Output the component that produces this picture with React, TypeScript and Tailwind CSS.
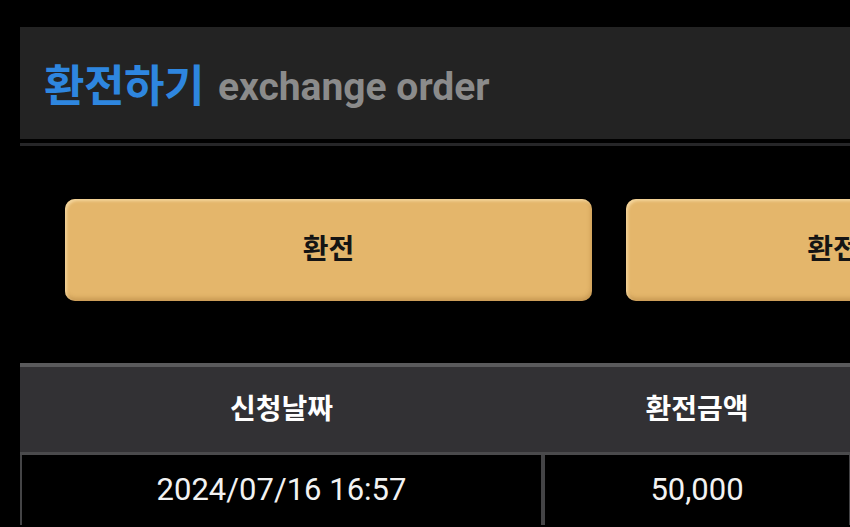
import React from "react";

const font = { fontFamily: 'Roboto, "Noto Sans CJK KR", "Noto Sans", sans-serif' };

const btn =
  "flex h-[102px] w-[527px] shrink-0 items-center justify-center rounded-[10px] bg-[#e4b66b] text-[28px] font-bold text-[#141414] shadow-[inset_2px_2px_3px_rgba(255,235,190,0.6),inset_-1px_-3px_4px_rgba(150,100,40,0.35),0_2px_3px_rgba(0,0,0,0.6)]";

export default function App() {
  return (
    <div className="min-h-screen w-full overflow-hidden bg-black" style={font}>
      <div className="w-[1300px] pl-[20px] pt-[27px]">
        {/* Header panel */}
        <div className="flex h-[112px] items-center bg-[#232323] pl-[24px] pt-[8px]">
          <span className="text-[44px] font-bold leading-none tracking-[-0.5px] text-[#2e86df]">환전하기</span>
          <span className="ml-[14px] text-[39px] font-bold leading-none text-[#8b8b8b]">exchange order</span>
        </div>
        <div className="mt-[4px] h-[3px] bg-[#262628]" />

        {/* Buttons */}
        <div className="mt-[53px] flex gap-[34px] pl-[45px]">
          <button className={btn}>환전</button>
          <button className={btn}>
            <span className="pr-[10px]">환전신청내역</span>
          </button>
        </div>

        {/* Table */}
        <div className="mt-[62px] border-t-[4px] border-[#5a5a5c]">
          <div className="flex h-[85px] bg-[#323134] text-[28px] font-bold text-white">
            <div className="flex w-[523px] items-center justify-center">신청날짜</div>
            <div className="flex w-[308px] items-center justify-center">환전금액</div>
            <div className="flex-1" />
          </div>
          <div className="h-[3px] bg-[#4a4a4c]" />
          <div className="flex h-[70px] text-[31px] text-[#f2f2f2]">
            <div className="flex w-[523px] items-center justify-center border-l-[2px] border-r-[2px] border-[#444446]">2024/07/16 16:57</div>
            <div className="flex w-[308px] items-center justify-center border-l-[2px] border-r-[2px] border-[#444446]">50,000</div>
            <div className="flex-1" />
          </div>
        </div>
      </div>
    </div>
  );
}
